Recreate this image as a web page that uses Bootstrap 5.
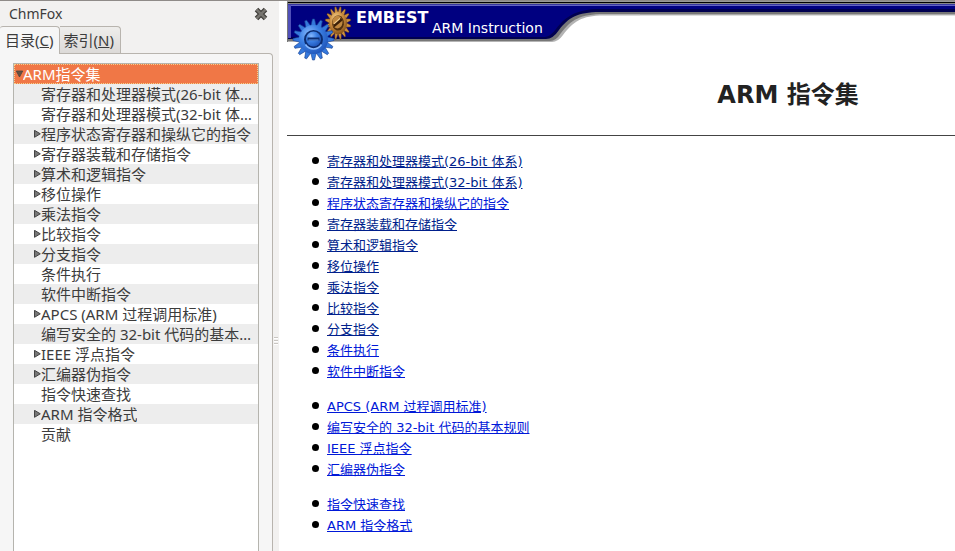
<!DOCTYPE html>
<html lang="zh-CN">
<head>
<meta charset="utf-8">
<meta name="viewport" content="width=device-width, initial-scale=1">
<title>ChmFox</title>
<link rel="stylesheet" href="https://cdn.jsdelivr.net/npm/bootstrap@5.3.0/dist/css/bootstrap.min.css">
<style>
  body { border-top: 1px solid #8f8b88; font-family: "Noto Sans", "Noto Sans CJK SC", sans-serif; color: #3c3c3c; background: #fff; }
  .side { width: 279px; background: #f2f1f0; font-size: 15px; line-height: 20px; }
  .side-title { font-size: 14px; padding: 2px 5px 2px 9px; height: 25px; }
  .side-tab { background: linear-gradient(#eeedeb, #dcdad8); border: 1px solid #b8b4ae; border-left: 0; border-bottom: 0; border-radius: 0 4px 0 0; color: #3c3c3c; padding: 2px 6px 2px 4px; line-height: 22px; }
  .side-tab.active { background: #f6f6f6; border-radius: 3px 4px 0 0; padding: 2px 5px 3px 5px; margin-bottom: -1px; position: relative; }
  .side-panel { background: #f6f6f6; border: 1px solid #b8b4ae; border-width: 1px 1px 0 0; border-radius: 0 4px 0 0; padding: 9px 13px 0; }
  .tree { background: #fff; border: 1px solid #b5b4ae; border-bottom: 0; }
  .tree button { border: 0; background: none; color: #3c3c3c; padding: 0 5px 0 20px; height: 20px; line-height: 20px; }
  .tree li:nth-child(even) button { background: #ededed; }
  .tree li:first-child button { background: #f07746; color: #fff; outline: 1px dotted #f5d08a; outline-offset: -1px; padding-left: 2px; }
  .arrow { width: 7px; height: 9px; flex: none; }
  .splitter { width: 6px; padding-top: 130px; }
  .grip { width: 4px; height: 8px; background: repeating-linear-gradient(#c9c6c2 0 1px, #fff 1px 2px, #f2f1f0 2px 3px); }
  .doc { font-family: "DejaVu Sans", "Noto Sans CJK SC", sans-serif; color: #000; padding-left: 8px; }
  .sheet { width: 150%; }
  .banner-line { height: 16px; background: linear-gradient(#999 0 1px, #000 1px 2px, #888 2px 3px, #3838a0 3px 4px, #6464c4 4px 5px, #000080 5px 8px, #000050 8px 11px, #777 11px 13px, #a8a8a8 13px 14px, #ddd 14px 15px, #fff 15px); }
  .doc h1 { font-size: 24px; line-height: 32px; color: #222; padding: 17px 0 24px; margin: 0; }
  .doc hr { margin: 0 0 15px; border-color: #444; opacity: 1; }
  .doc ul { padding-left: 25px; margin-bottom: 14px; font-size: 13px; line-height: 21px; }
  .doc li::before { content: ""; width: 7px; height: 7px; margin: 6px 8px 0 0; border-radius: 50%; background: #000; }
  .doc a { color: #0018d8; }
  .doc a.seen { color: #001f8c; }
</style>
<script src="https://cdn.jsdelivr.net/npm/bootstrap@5.3.0/dist/js/bootstrap.bundle.min.js"></script>
</head>
<body class="d-flex vh-100 overflow-hidden">
<svg width="0" height="0" class="position-absolute" aria-hidden="true">
  <symbol id="closed" viewBox="0 0 7 9"><path d="M.5 .3 6.3 3.800 .5 7.300z" fill="#777" stroke="#444" stroke-width="1"/></symbol>
  <symbol id="open" viewBox="0 0 7 9"><path d="M.3 1h6.400L3.500 7z" fill="#685040" stroke="#4b4540" stroke-width=".8"/></symbol>
</svg>
<aside class="side d-flex flex-shrink-0">
  <div class="d-flex flex-column flex-grow-1 overflow-hidden">
    <div class="side-title d-flex justify-content-between align-items-center">
      <span>ChmFox</span>
      <button type="button" class="border-0 bg-transparent p-0 d-flex" aria-label="关闭">
        <svg width="14" height="14" viewBox="0 0 14 14"><path d="M2.500 2.500l9 9M11.500 2.500l-9 9" stroke="#3f3d39" stroke-width="5"/><path d="M2.500 2.500l9 9M11.500 2.500l-9 9" stroke="#777570" stroke-width="2.500"/></svg>
      </button>
    </div>
    <div class="d-flex align-items-end" role="tablist">
      <button type="button" role="tab" aria-selected="true" class="side-tab active">目录(<u>C</u>)</button>
      <button type="button" role="tab" aria-selected="false" class="side-tab">索引(<u>N</u>)</button>
    </div>
    <div class="side-panel d-flex flex-grow-1">
      <ul class="tree list-unstyled flex-grow-1 mb-0 overflow-hidden">
        <li><button class="w-100 d-flex align-items-center text-start"><svg class="arrow"><use href="#open"/></svg><span class="text-truncate">ARM指令集</span></button></li>
        <li><button class="w-100 d-flex align-items-center text-start"><span class="arrow"></span><span class="text-truncate">寄存器和处理器模式(26-bit 体系)</span></button></li>
        <li><button class="w-100 d-flex align-items-center text-start"><span class="arrow"></span><span class="text-truncate">寄存器和处理器模式(32-bit 体系)</span></button></li>
        <li><button class="w-100 d-flex align-items-center text-start"><svg class="arrow"><use href="#closed"/></svg><span class="text-truncate">程序状态寄存器和操纵它的指令</span></button></li>
        <li><button class="w-100 d-flex align-items-center text-start"><svg class="arrow"><use href="#closed"/></svg><span class="text-truncate">寄存器装载和存储指令</span></button></li>
        <li><button class="w-100 d-flex align-items-center text-start"><svg class="arrow"><use href="#closed"/></svg><span class="text-truncate">算术和逻辑指令</span></button></li>
        <li><button class="w-100 d-flex align-items-center text-start"><svg class="arrow"><use href="#closed"/></svg><span class="text-truncate">移位操作</span></button></li>
        <li><button class="w-100 d-flex align-items-center text-start"><svg class="arrow"><use href="#closed"/></svg><span class="text-truncate">乘法指令</span></button></li>
        <li><button class="w-100 d-flex align-items-center text-start"><svg class="arrow"><use href="#closed"/></svg><span class="text-truncate">比较指令</span></button></li>
        <li><button class="w-100 d-flex align-items-center text-start"><svg class="arrow"><use href="#closed"/></svg><span class="text-truncate">分支指令</span></button></li>
        <li><button class="w-100 d-flex align-items-center text-start"><span class="arrow"></span><span class="text-truncate">条件执行</span></button></li>
        <li><button class="w-100 d-flex align-items-center text-start"><span class="arrow"></span><span class="text-truncate">软件中断指令</span></button></li>
        <li><button class="w-100 d-flex align-items-center text-start"><svg class="arrow"><use href="#closed"/></svg><span class="text-truncate">APCS (ARM 过程调用标准)</span></button></li>
        <li><button class="w-100 d-flex align-items-center text-start"><span class="arrow"></span><span class="text-truncate">编写安全的 32-bit 代码的基本规则</span></button></li>
        <li><button class="w-100 d-flex align-items-center text-start"><svg class="arrow"><use href="#closed"/></svg><span class="text-truncate">IEEE 浮点指令</span></button></li>
        <li><button class="w-100 d-flex align-items-center text-start"><svg class="arrow"><use href="#closed"/></svg><span class="text-truncate">汇编器伪指令</span></button></li>
        <li><button class="w-100 d-flex align-items-center text-start"><span class="arrow"></span><span class="text-truncate">指令快速查找</span></button></li>
        <li><button class="w-100 d-flex align-items-center text-start"><svg class="arrow"><use href="#closed"/></svg><span class="text-truncate">ARM 指令格式</span></button></li>
        <li><button class="w-100 d-flex align-items-center text-start"><span class="arrow"></span><span class="text-truncate">贡献</span></button></li>
      </ul>
    </div>
  </div>
  <div class="splitter d-flex align-items-center justify-content-center" role="separator">
    <div class="grip"></div>
  </div>
</aside>
<main class="doc flex-grow-1 overflow-hidden">
  <div class="sheet">
    <header class="d-flex align-items-start">
      <svg class="flex-shrink-0" width="353" height="61" viewBox="287 1 353 61" role="img" aria-label="EMBEST ARM Instruction">
        <defs>
          <radialGradient id="blue" cx=".35" cy=".3" r=".8"><stop offset="0" stop-color="#86b8fc"/><stop offset=".45" stop-color="#3c80e4"/><stop offset="1" stop-color="#1c50b4"/></radialGradient>
          <radialGradient id="gold" cx=".35" cy=".3" r=".8"><stop offset="0" stop-color="#f4cc88"/><stop offset=".5" stop-color="#c88a3c"/><stop offset="1" stop-color="#7c4c18"/></radialGradient>
          <path id="tooth" d="M-2.800-13-1-20.500H1L2.800-13z"/>
          <g id="teeth"><use href="#tooth"/><use href="#tooth" transform="rotate(22.500)"/><use href="#tooth" transform="rotate(45)"/><use href="#tooth" transform="rotate(67.500)"/></g>
          <g id="ring"><use href="#teeth"/><use href="#teeth" transform="rotate(90)"/><use href="#teeth" transform="rotate(180)"/><use href="#teeth" transform="rotate(270)"/></g>
        </defs>
        <path d="M287 1H640V15.500H606C582 15 574 21 563 35Q558 42 552 42H287z" fill="#b4b4b4"/>
        <path d="M287 1H640V14H604C580 14 571 20 561 33Q556 41 550 41H287z" fill="#777"/>
        <path d="M287 1H640V12H600C577 12 568 18 559 30Q553 39 546 39H287z" fill="#000050"/>
        <path d="M289 5H640V9H600C576 9 565 17 556 29Q551 36 545 37H289z" fill="#000080"/>
        <path d="M287 1.500H640" stroke="#999"/><path d="M287 2.500H640" stroke="#000"/><path d="M288 3.500H640" stroke="#888"/>
        <path d="M288 4.500H640" stroke="#3838a0"/><path d="M288 5.500H640" stroke="#6464c4"/>
        <path d="M287.500 2V42" stroke="#777"/><path d="M289.500 5V38" stroke="#5050b8" stroke-width="3"/>
        <g transform="translate(338 23) scale(.63 .8) rotate(11)">
          <use href="#ring" fill="#cc9040" stroke="#4c2c10" stroke-width=".6"/>
          <circle r="14" fill="url(#gold)"/><circle r="9.500" fill="#50300f"/><circle cx="-1" cy="-1" r="8" fill="#c08840"/>
          <path d="M-6 5 5-6" stroke="#3c2008" stroke-width="4"/><path d="M-6 2 2-6" stroke="#f4d090" stroke-width="1.500"/>
        </g>
        <g transform="translate(313.500 39.500)">
          <use href="#ring" fill="#3478dc" stroke="#163f90" stroke-width=".6"/>
          <circle r="14.500" fill="url(#blue)"/><circle r="9.500" fill="#0c2c70"/><path d="M-8 5A9.500 9.500 0 0 0 8 5" fill="none" stroke="#8abaff" stroke-width="1.500"/>
          <circle cy="-.5" r="7.500" fill="url(#blue)"/><path d="M-6-.5H6" stroke="#0c2c70" stroke-width="3"/><path d="M-5 .5H5" stroke="#5c98ec"/>
        </g>
        <text x="356" y="23" fill="#fff" font-size="16" font-weight="700">EMBEST</text>
        <text x="432" y="33" fill="#fff" font-size="14">ARM Instruction</text>
      </svg>
      <div class="banner-line flex-grow-1"></div>
    </header>
    <h1 class="fw-bold text-center">ARM 指令集</h1>
    <hr>
    <ul class="list-unstyled">
      <li class="d-flex"><a class="seen" href="#">寄存器和处理器模式(26-bit 体系)</a></li>
      <li class="d-flex"><a class="seen" href="#">寄存器和处理器模式(32-bit 体系)</a></li>
      <li class="d-flex"><a href="#">程序状态寄存器和操纵它的指令</a></li>
      <li class="d-flex"><a class="seen" href="#">寄存器装载和存储指令</a></li>
      <li class="d-flex"><a class="seen" href="#">算术和逻辑指令</a></li>
      <li class="d-flex"><a class="seen" href="#">移位操作</a></li>
      <li class="d-flex"><a class="seen" href="#">乘法指令</a></li>
      <li class="d-flex"><a class="seen" href="#">比较指令</a></li>
      <li class="d-flex"><a class="seen" href="#">分支指令</a></li>
      <li class="d-flex"><a href="#">条件执行</a></li>
      <li class="d-flex"><a href="#">软件中断指令</a></li>
    </ul>
    <ul class="list-unstyled">
      <li class="d-flex"><a href="#">APCS (ARM 过程调用标准)</a></li>
      <li class="d-flex"><a href="#">编写安全的 32-bit 代码的基本规则</a></li>
      <li class="d-flex"><a href="#">IEEE 浮点指令</a></li>
      <li class="d-flex"><a href="#">汇编器伪指令</a></li>
    </ul>
    <ul class="list-unstyled">
      <li class="d-flex"><a href="#">指令快速查找</a></li>
      <li class="d-flex"><a href="#">ARM 指令格式</a></li>
    </ul>
  </div>
</main>
</body>
</html>
